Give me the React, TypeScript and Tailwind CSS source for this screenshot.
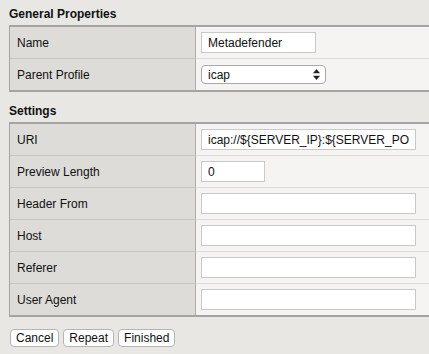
import React from 'react';

const font = { fontFamily: '"Liberation Sans", Arial, sans-serif' };

interface FieldRow {
  label: string;
  kind: 'text' | 'select';
  value?: string;
  width: string;
}

const general: FieldRow[] = [
  { label: 'Name', kind: 'text', value: 'Metadefender', width: 'w-[115px]' },
  { label: 'Parent Profile', kind: 'select', value: 'icap', width: 'w-[125px]' },
];

const settings: FieldRow[] = [
  { label: 'URI', kind: 'text', value: 'icap://${SERVER_IP}:${SERVER_PORT}', width: 'w-[215px]' },
  { label: 'Preview Length', kind: 'text', value: '0', width: 'w-[64px]' },
  { label: 'Header From', kind: 'text', value: '', width: 'w-[215px]' },
  { label: 'Host', kind: 'text', value: '', width: 'w-[215px]' },
  { label: 'Referer', kind: 'text', value: '', width: 'w-[215px]' },
  { label: 'User Agent', kind: 'text', value: '', width: 'w-[215px]' },
];

function SelectArrows() {
  return (
    <svg width="7" height="11" viewBox="0 0 7 11" className="shrink-0">
      <path d="M3.5 0 L7 4.2 L0 4.2 Z" fill="#222" />
      <path d="M3.5 11 L7 6.8 L0 6.8 Z" fill="#222" />
    </svg>
  );
}

function Field({ row }: { row: FieldRow }) {
  if (row.kind === 'select') {
    return (
      <div
        className={`${row.width} h-[19px] bg-white border border-[#a9a9a9] rounded-[4px] flex items-center justify-between pl-[6px] pr-[5px] text-[12px] text-[#111]`}
      >
        <span>{row.value}</span>
        <SelectArrows />
      </div>
    );
  }
  return (
    <div
      className={`${row.width} h-[21px] bg-white border border-[#c9c9c9] flex items-center pl-[6px] pr-[6px] text-[12px] text-[#111]`}
    >
      <span className="flex-1 min-w-0 overflow-hidden whitespace-nowrap">{row.value}</span>
    </div>
  );
}

function Section({ title, rows, first }: { title: string; rows: FieldRow[]; first?: boolean }) {
  return (
    <div>
      <h2
        className={`${first ? 'mt-[7px]' : 'mt-[12px]'} mb-[3px] text-[12px] leading-[15px] font-bold text-[#111]`}
      >
        {title}
      </h2>
      <div className="border-t-2 border-b-2 border-l border-[#a4a4a4]">
        {rows.map((row, i) => (
          <div key={row.label} className={`grid grid-cols-[186px_1fr] ${i > 0 ? 'h-[32px]' : 'h-[31px]'}`}>
            <div
              className={`bg-[#dddcd9] border-r border-r-[#aeadab] ${i > 0 ? 'border-t border-t-[#c6c5c3]' : ''} flex items-center pl-[7px] text-[12px] text-[#111]`}
            >
              {row.label}
            </div>
            <div
              className={`bg-[#f5f4f2] ${i > 0 ? 'border-t border-t-[#dddcda]' : ''} flex items-center pl-[5px]`}
            >
              <Field row={row} />
            </div>
          </div>
        ))}
      </div>
    </div>
  );
}

export default function App() {
  return (
    <div className="w-[429px] h-[354px] bg-[#e8e7e4] pl-[9px] overflow-hidden" style={font}>
      <Section title="General Properties" rows={general} first />
      <Section title="Settings" rows={settings} />
      <div className="flex gap-[4px] mt-[12px] pl-[1px]">
        {['Cancel', 'Repeat', 'Finished'].map((b) => (
          <button
            key={b}
            className="h-[18px] px-[5px] bg-white border border-[#b5b5b5] rounded-[4px] text-[12px] leading-none text-[#111]"
          >
            {b}
          </button>
        ))}
      </div>
    </div>
  );
}
